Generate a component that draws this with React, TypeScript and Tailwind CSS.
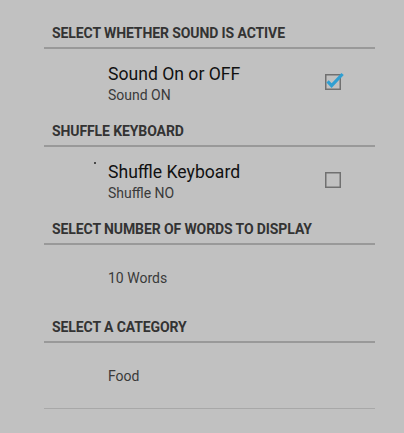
import React from "react";

type Pref =
  | { kind: "check"; header: string; title: string; summary: string; checked: boolean; dot?: boolean }
  | { kind: "list"; header: string; value: string };

const prefs: Pref[] = [
  { kind: "check", header: "Select whether sound is active", title: "Sound On or OFF", summary: "Sound ON", checked: true },
  { kind: "check", header: "Shuffle Keyboard", title: "Shuffle Keyboard", summary: "Shuffle NO", checked: false, dot: true },
  { kind: "list", header: "Select number of words to display", value: "10 Words" },
  { kind: "list", header: "Select a category", value: "Food" },
];

function CheckBox({ checked }: { checked: boolean }) {
  return (
    <svg width="16" height="16" viewBox="0 0 16 16" className="overflow-visible">
      <rect x="0.75" y="0.75" width="14.5" height="14.5" fill="none" stroke="#707070" strokeWidth="1.5" />
      {checked && (
        <path
          d="M2.6 7.4 L6.6 11.6 L17.6 0"
          fill="none"
          stroke="#2f9fd2"
          strokeWidth="3.2"
          strokeLinejoin="miter"
        />
      )}
    </svg>
  );
}

function Section({ pref }: { pref: Pref }) {
  return (
    <div>
      <div className="pt-[9px]">
        <div className="pl-[8px] text-[14px] leading-[16px] font-bold uppercase tracking-[-0.1px] text-[#333333]">
          {pref.header}
        </div>
        <div className="mt-[6px] h-[2px] bg-[#999999]" />
      </div>
      {pref.kind === "check" ? (
        <div className="flex h-[65px] items-stretch">
          <div className="w-[64px] shrink-0">
            {pref.dot && <div className="ml-[50px] mt-[15px] h-[2px] w-[2px] rounded-full bg-[#222222]" />}
          </div>
          <div className="flex-1 pt-[14px]">
            <div className="text-[17.6px] leading-[22px] text-[#111111]">{pref.title}</div>
            <div className="text-[14px] leading-[20px] text-[#3a3a3a]">{pref.summary}</div>
          </div>
          <div className="flex w-[50px] items-center">
            <CheckBox checked={pref.checked} />
          </div>
        </div>
      ) : (
        <div className="flex h-[65px] items-center pl-[64px]">
          <div className="text-[14px] leading-[20px] text-[#3a3a3a]">{pref.value}</div>
        </div>
      )}
    </div>
  );
}

export default function App() {
  return (
    <div
      className="h-[433px] w-[404px] overflow-hidden bg-[#c1c1c1] pt-[16px]"
      style={{ fontFamily: "Roboto, 'Liberation Sans', sans-serif" }}
    >
      <div className="ml-[44px] w-[331px]">
        {prefs.map((p) => (
          <Section key={p.header} pref={p} />
        ))}
        <div className="h-px bg-[#a8a8a8]" />
      </div>
    </div>
  );
}
